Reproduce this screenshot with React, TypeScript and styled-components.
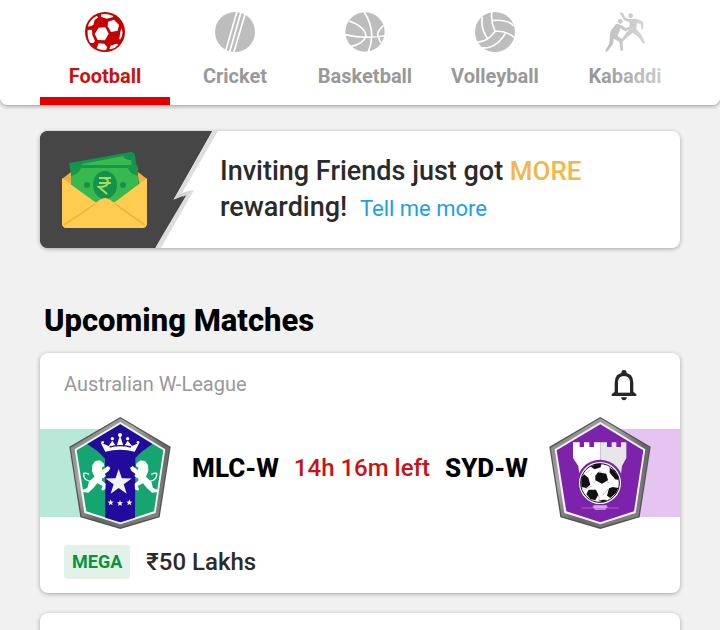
import React, { useState } from "react";
import styled, { createGlobalStyle } from "styled-components";

const GlobalStyle = createGlobalStyle`
  *, *::before, *::after { box-sizing: border-box; }
  body {
    margin: 0;
    background: #f1f1f1;
    color: #2b2b2b;
    font-family: Roboto, "Noto Sans", sans-serif;
  }
  button { font: inherit; border: 0; padding: 0; background: none; cursor: pointer; }
  h1, h2, p { margin: 0; }
  svg { display: block; flex: none; }
`;

const Page = styled.div`
  height: 100vh;
  overflow: hidden;
`;

const SportsBar = styled.nav`
  position: relative;
  display: flex;
  padding: 0 40px;
  overflow: hidden;
  background: #fff;
  border-radius: 0 0 8px 8px;

  &::after {
    content: "";
    position: absolute;
    inset: 0 0 0 auto;
    width: 120px;
    background: linear-gradient(to right, rgba(255, 255, 255, 0), #fff);
    pointer-events: none;
  }
`;

const BarShadow = styled.header`
  border-radius: 0 0 8px 8px;
  box-shadow: 0 1px 4px rgba(0, 0, 0, 0.4);
`;

const SportTab = styled.button<{ $active: boolean }>`
  flex: 0 0 130px;
  display: flex;
  flex-direction: column;
  align-items: center;
  gap: 12px;
  padding: 12px 0 9px;
  border-bottom: 8px solid ${(p) => (p.$active ? "#e10000" : "transparent")};
  color: ${(p) => (p.$active ? "#c61313" : "#999")};
  font-size: 20px;
  font-weight: 700;
  line-height: 24px;

  svg { color: ${(p) => (p.$active ? "#c50000" : "#bdbdbd")}; }
`;

const Content = styled.main`
  display: flex;
  flex-direction: column;
  padding: 26px 40px 0;
`;

const Card = styled.section`
  background: #fff;
  border-radius: 8px;
  box-shadow: 0 1px 4px rgba(0, 0, 0, 0.32);
`;

const Banner = styled(Card)`
  display: flex;
  align-items: center;
  overflow: hidden;
`;

const BannerText = styled.p`
  font-size: 27px;
  font-weight: 500;
  line-height: 36px;
`;

const Highlight = styled.span`
  color: #f0b74a;
  font-size: 26px;
`;

const MoreLink = styled.a`
  margin-left: 6px;
  color: #1e9fe8;
  font-size: 22px;
  font-weight: 400;
  text-decoration: none;
`;

const SectionTitle = styled.h1`
  margin: 53px 4px 12px;
  color: #000;
  font-size: 31px;
  font-weight: 800;
  line-height: 40px;
`;

const MatchCard = styled(Card)`
  margin-bottom: 20px;
`;

const MatchHead = styled.div`
  display: flex;
  align-items: center;
  justify-content: space-between;
  padding: 15px 42px 14px 24px;
`;

const League = styled.h2`
  padding-bottom: 2px;
  color: #999;
  font-size: 20px;
  font-weight: 400;
  line-height: 30px;
`;

const Teams = styled.div`
  display: flex;
  align-items: center;
  justify-content: space-between;
`;

const Flag = styled.div<{ $side: "left" | "right"; $color: string }>`
  padding-${(p) => p.$side}: 28px;
  background: linear-gradient(${(p) => p.$color}, ${(p) => p.$color}) no-repeat
    ${(p) => p.$side} center / 80px 88px;
`;

const Versus = styled.div`
  flex: 1;
  display: flex;
  align-items: center;
  justify-content: center;
  gap: 15px;
  padding: 0 20px 10px;
  white-space: nowrap;
`;

const TeamName = styled.span`
  color: #000;
  font-size: 26px;
  font-weight: 800;
  line-height: 32px;
`;

const TimeLeft = styled.span`
  color: #cb1111;
  font-size: 24px;
  font-weight: 500;
  line-height: 32px;
`;

const MatchFoot = styled.div`
  display: flex;
  align-items: center;
  gap: 16px;
  padding: 15px 24px 14px;
`;

const Tag = styled.span`
  padding: 5px 8px;
  border-radius: 3px;
  background: #e3f2e8;
  color: #0a933d;
  font-size: 18px;
  font-weight: 700;
  line-height: 24px;
`;

const Prize = styled.span`
  font-size: 24px;
  font-weight: 500;
  line-height: 34px;
`;

const NextCard = styled(Card)`
  min-height: 240px;
`;

const FootballIcon = () => (
  <svg width="40" height="40" viewBox="135 37 120 120" aria-hidden="true">
    <circle cx="195" cy="97" r="60" fill="currentColor" />
    <g fill="#fff">
      <path d="M176 84 196 83 206 102 195 122 173 121 164 103Z" />
      <path d="M184 44Q202 41 218 48L220 52 200 57 183 51Z" />
      <path d="M170 49 175 53 164 61 160 76 146 81 144 78Q151 58 170 49Z" />
      <path d="M204 66 222 60 237 76 233 93 213 97 203 80Z" />
      <path d="M143 91 156 90 157 106 165 124 160 130 150 129Q141 112 143 91Z" />
      <path d="M176 131 193 132 202 143 198 151Q181 153 170 146Z" />
      <path d="M244 85Q250 97 246 110L240 120 238 116 241 98Z" />
      <path d="M212 138 229 132 235 135Q227 145 212 149L208 148Z" />
    </g>
  </svg>
);

const CricketIcon = () => (
  <svg width="40" height="40" viewBox="525 37 120 120" aria-hidden="true">
    <circle cx="585" cy="97" r="60" fill="currentColor" />
    <path d="M592 32 556 157M604 34 568 160M617 38 580 162" stroke="#fff" strokeWidth="5" />
  </svg>
);

const BasketballIcon = () => (
  <svg width="40" height="40" viewBox="134 37 120 120" aria-hidden="true">
    <circle cx="194" cy="97" r="59" fill="currentColor" />
    <path
      d="M191 36Q230 95 203 159M134 105Q190 119 256 108M146 64Q193 80 197 108 190 133 150 141M249 78Q226 100 234 111 237 126 246 134"
      fill="none"
      stroke="#fff"
      strokeWidth="5"
    />
  </svg>
);

const VolleyballIcon = () => (
  <svg width="40" height="40" viewBox="525 37 120 120" aria-hidden="true">
    <circle cx="585" cy="97" r="60" fill="currentColor" />
    <path
      d="M576 35Q571 65 585 95M547 52Q541 87 562 116M532 128Q566 124 585 95M585 95Q620 92 646 116M576 63Q620 57 642 79M542 144Q587 151 618 98"
      fill="none"
      stroke="#fff"
      strokeWidth="5"
    />
  </svg>
);

const KabaddiIcon = () => (
  <svg width="40" height="40" viewBox="194 37 120 120" aria-hidden="true">
    <g fill="currentColor">
      <circle cx="271" cy="48" r="7" />
      <circle cx="240" cy="65" r="7" />
      <path d="M239 40Q243 35 247 40L255 54 266 58 288 57 305 64Q309 66 309 71L309 87Q306 90 303 87L301 73 290 70 288 88 302 104 314 128Q314 133 309 132L294 112 277 99 258 115 246 127 243 120 256 102 267 88 268 69 250 60Z" />
      <path d="M227 73 237 74 247 78 256 85 268 81 270 87 256 95 247 91 241 86 234 102 232 109 247 119 248 152Q244 156 240 151L237 126 220 117 218 134 202 155Q196 159 195 152L207 132 209 106 211 93Z" />
    </g>
  </svg>
);

const BannerArt = () => (
  <svg width="180" height="117" viewBox="0 0 180 117" aria-hidden="true">
    <path d="M0 0H178L142 62 154 59 121 117H0Z" fill="#dedede" />
    <path d="M0 0H172L133 69 147 63 115 117H0Z" fill="#464646" />
    <path d="M133 70 139 63 153 59 147 64Z" fill="#d4d4d4" />
    <path d="M0 0H172L133 69 143 65 115 117H0Z" fill="#464646" />
    <path d="M22 48 31 41H98L107 48V93Q106 97 102 97H27Q22 97 22 92Z" fill="#eeb13f" />
    <path d="M29 32 91 21Q94 21 95 24L101 65 36 70Z" fill="#12944b" />
    <path d="M42 33 83 25Q85 29 91 29L96 62 45 65Z" fill="#37b94f" />
    <rect x="31" y="34" width="67" height="40" rx="2" fill="#16974b" />
    <path d="M41 37H88Q90 43 98 45V74H31V45Q39 43 41 37Z" fill="#37b94f" />
    <ellipse cx="65" cy="54" rx="12" ry="14" fill="#14924a" />
    <circle cx="47" cy="54" r="3" fill="#14924a" />
    <circle cx="83" cy="54" r="3" fill="#14924a" />
    <path
      d="M59 47H71M59 52H71M59 47H63Q68 47 68 51 68 56 59 56L67 63"
      fill="none"
      stroke="#a4dc63"
      strokeWidth="2"
    />
    <path d="M22 47 55 71H75L107 47V92Q107 97 102 97H27Q22 97 22 92Z" fill="#ffcc52" />
    <path d="M24 94 61 69M105 94 69 69" stroke="#efb544" strokeWidth="2" />
    <path d="M27 97H102L70 69Q65 65 60 69Z" fill="#ffcc52" />
  </svg>
);

const BellIcon = () => (
  <svg width="28" height="34" viewBox="60 70 84 102" aria-hidden="true">
    <path
      d="M79 149V114Q79 89 102 89T125 114V149"
      fill="none"
      stroke="#272727"
      strokeWidth="10"
    />
    <path d="M65 154V149L76 140H128L139 149V154Z" fill="#272727" />
    <path d="M84 136H120V144H84Z" fill="#fff" />
    <circle cx="102" cy="84" r="8" fill="#272727" />
    <path d="M93 158H111Q109 167 102 167T93 158Z" fill="#272727" />
  </svg>
);

const Shield = ({ id, fill, children }: { id: string; fill: string; children: React.ReactNode }) => (
  <svg width="104" height="114" viewBox="24 18 312 342" aria-hidden="true">
    <defs>
      <linearGradient id={id} x1="0" y1="0" x2="1" y2="1">
        <stop offset="0" stopColor="#777" />
        <stop offset="0.35" stopColor="#a9a9a9" />
        <stop offset="0.6" stopColor="#666" />
        <stop offset="1" stopColor="#8c8c8c" />
      </linearGradient>
    </defs>
    <path d="M181 21 332 110 299 322 181 357 61 322 28 110Z" fill="#555" />
    <path d="M181 25 328 113 295 319 181 352 65 319 32 113Z" fill={`url(#${id})`} />
    <path d="M181 36 316 118 287 309 181 343 73 309 44 118Z" fill="#f3f3f3" />
    <path d="M181 43 310 121 282 304 181 337 79 304 50 121Z" fill={fill} />
    {children}
  </svg>
);

const Lion = () => (
  <g fill="#fff">
    <path d="M97 165 105 154 119 151 131 160 133 168 125 173 128 180 143 168 151 173 147 182 131 195 125 211 137 221 136 238 126 242 124 236 128 228 112 220 101 233 85 248 68 246 69 239 82 234 87 215 103 200 96 183Z" />
    <path d="M115 190 133 190 138 198 129 205 114 199Z" />
    <path d="M91 214Q68 209 71 190 77 188 87 193" fill="none" stroke="#fff" strokeWidth="4" />
  </g>
);

const star = (cx: number, cy: number, r: number) =>
  Array.from({ length: 10 }, (_, i) => {
    const radius = i % 2 ? r * 0.39 : r;
    const angle = (Math.PI * i) / 5 - Math.PI / 2;
    return `${cx + radius * Math.cos(angle)},${cy + radius * Math.sin(angle)}`;
  }).join(" ");

const MelbourneBadge = () => (
  <Shield id="rim-mlc" fill="#14a570">
    <path d="M181 43 277 102 244 126 226 144 225 323 181 337 136 323 135 146 115 125 82 102Z" fill="#210a9c" />
    <path
      d="M136 125 122 98 146 108 157 92 169 110 180 76 191 110 203 92 216 108 238 98 224 125Q180 113 136 125Z"
      fill="#fff"
    />
    <g fill="#fff">
      <circle cx="180" cy="75" r="6" />
      <circle cx="157" cy="86" r="5" />
      <circle cx="203" cy="86" r="5" />
      <circle cx="128" cy="97" r="4" />
      <circle cx="234" cy="97" r="4" />
    </g>
    <path d="M149 111Q180 103 213 111" fill="none" stroke="#210a9c" strokeWidth="4" />
    <Lion />
    <g transform="translate(361 0) scale(-1 1)">
      <Lion />
    </g>
    <polygon points={star(176, 218, 41)} fill="#f2f2fa" />
    <polygon points={star(152, 278, 10)} fill="#fff" />
    <polygon points={star(180, 280, 10)} fill="#fff" />
    <polygon points={star(208, 278, 10)} fill="#fff" />
  </Shield>
);

const SydneyBadge = () => (
  <Shield id="rim-syd" fill="#7d22ab">
    <path
      d="M99 97H119V111H132V97H148V111H162V97H181V203H119L115 168 99 144Z"
      fill="#fff"
    />
    <path d="M181 97H201V111H215V97H229V111H243V97H259V144L246 168 242 203H181Z" fill="#e7e7e7" />
    <circle cx="180" cy="218" r="69" fill="#7d22ab" />
    <circle cx="180" cy="219" r="63" fill="#fff" />
    <circle cx="180" cy="219" r="58" fill="#fff" stroke="#111" strokeWidth="3" />
    <g stroke="#999" strokeWidth="2">
      <path d="M176 181 186 190M166 215 161 219M201 216 207 218M169 249 159 240M188 256 204 237M137 189 150 180M206 175 213 169M155 228 133 240M225 209 235 206M176 255 178 276" />
    </g>
    <g fill="#111">
      <path d="M174 187 199 191 204 211 186 221 166 211 166 197Z" />
      <path d="M152 170 167 162 184 161 182 172 164 178Z" />
      <path d="M124 203 132 193 145 203 151 224 139 234 124 231Z" />
      <path d="M209 173 222 181 235 199 236 210 225 207 209 188Z" />
      <path d="M146 239 168 239 175 254 166 271 151 267 139 253Z" />
      <path d="M207 235 218 231 235 234 228 249 211 264 201 257Z" />
      <path d="M176 272 190 269 202 270 188 277Z" />
    </g>
    <path d="M125 294H237" stroke="#a565c4" strokeWidth="3" />
    <path d="M160 285H201L197 300H164Z" fill="#bd8bd3" />
    <path d="M158 291H203" stroke="#e3c9ee" strokeWidth="3" />
  </Shield>
);

const sports = [
  { name: "Football", Icon: FootballIcon },
  { name: "Cricket", Icon: CricketIcon },
  { name: "Basketball", Icon: BasketballIcon },
  { name: "Volleyball", Icon: VolleyballIcon },
  { name: "Kabaddi", Icon: KabaddiIcon },
];

export default function App() {
  const [selected, setSelected] = useState("Football");

  return (
    <Page>
      <GlobalStyle />
      <BarShadow>
        <SportsBar aria-label="Sports">
          {sports.map(({ name, Icon }) => (
            <SportTab
              key={name}
              type="button"
              $active={name === selected}
              aria-pressed={name === selected}
              onClick={() => setSelected(name)}
            >
              <Icon />
              {name}
            </SportTab>
          ))}
        </SportsBar>
      </BarShadow>
      <Content>
        <Banner>
          <BannerArt />
          <BannerText>
            Inviting Friends just got <Highlight>MORE</Highlight>
            <br />
            rewarding! <MoreLink href="#rewards">Tell me more</MoreLink>
          </BannerText>
        </Banner>
        <SectionTitle>Upcoming Matches</SectionTitle>
        <MatchCard>
          <MatchHead>
            <League>Australian W-League</League>
            <button type="button" aria-label="Set match reminder">
              <BellIcon />
            </button>
          </MatchHead>
          <Teams>
            <Flag $side="left" $color="#b8e8d8">
              <MelbourneBadge />
            </Flag>
            <Versus>
              <TeamName>MLC-W</TeamName>
              <TimeLeft>14h 16m left</TimeLeft>
              <TeamName>SYD-W</TeamName>
            </Versus>
            <Flag $side="right" $color="#e6c4f2">
              <SydneyBadge />
            </Flag>
          </Teams>
          <MatchFoot>
            <Tag>MEGA</Tag>
            <Prize>₹50 Lakhs</Prize>
          </MatchFoot>
        </MatchCard>
        <NextCard />
      </Content>
    </Page>
  );
}
